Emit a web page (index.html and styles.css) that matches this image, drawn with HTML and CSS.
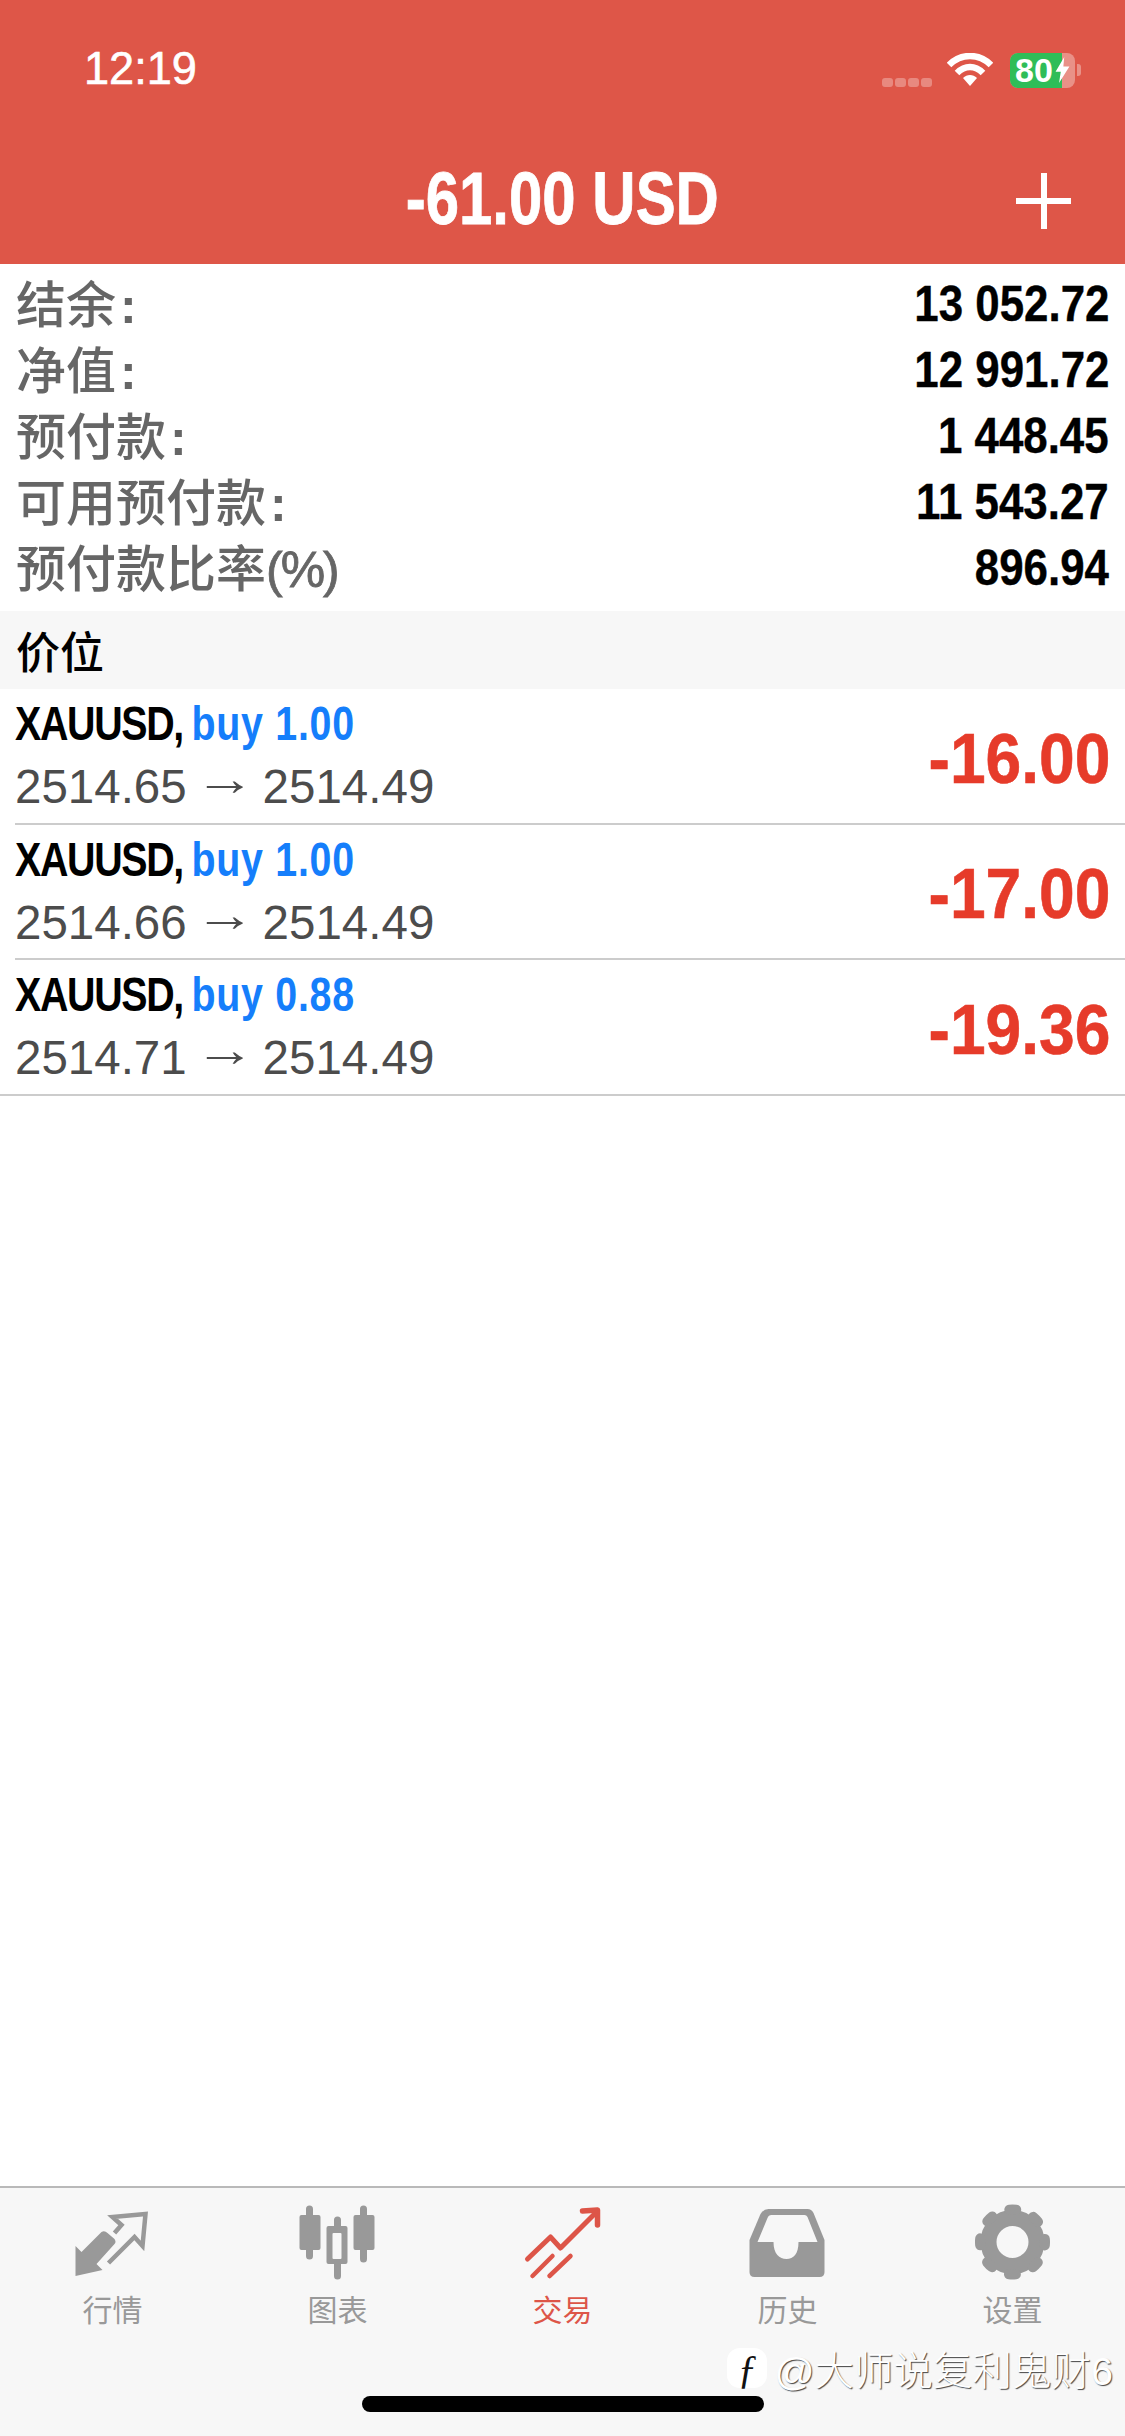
FILE: index.html
```html
<!DOCTYPE html>
<html lang="zh">
<head>
    <meta charset="UTF-8">
    <meta name="viewport" content="width=device-width, initial-scale=1.0">
    <title>交易</title>
    <link rel="stylesheet" href="styles.css">
</head>
<body>
    <div class="page">
        <header class="top">
            <div class="status">
                <span class="time">12:19</span>
                <div class="status-right">
                    <div class="signal"><i></i><i></i><i></i><i></i></div>
                    <svg class="wifi" viewBox="0 0 46 34">
                        <path d="M2 12 C14 0 32 0 44 12" fill="none" stroke="#fff" stroke-width="6.5"/>
                        <path d="M10 20 C18 12 28 12 36 20" fill="none" stroke="#fff" stroke-width="6.5"/>
                        <path d="M16 25 C20 21 26 21 30 25 L23 33 Z" fill="#fff"/>
                    </svg>
                    <div class="battery">
                        <div class="battery-fill"></div>
                        <span class="battery-num">80</span>
                        <svg class="bolt" viewBox="0 0 16 30"><path d="M10 0 L0 17 H6 L4 30 L16 11 H9 Z" fill="#fff"/></svg>
                    </div>
                    <div class="battery-cap"></div>
                </div>
            </div>
            <div class="title-bar">
                <span class="title">-61.00 USD</span>
                <div class="plus"></div>
            </div>
        </header>

        <section class="summary">
            <div class="summary-row"><span class="label">结余<span class="colon">:</span></span><span class="value">13 052.72</span></div>
            <div class="summary-row"><span class="label">净值<span class="colon">:</span></span><span class="value">12 991.72</span></div>
            <div class="summary-row"><span class="label">预付款<span class="colon">:</span></span><span class="value">1 448.45</span></div>
            <div class="summary-row"><span class="label">可用预付款<span class="colon">:</span></span><span class="value">11 543.27</span></div>
            <div class="summary-row"><span class="label">预付款比率<span class="unit">(%)</span></span><span class="value">896.94</span></div>
        </section>

        <div class="section-head">价位</div>

        <section class="trades">
            <div class="trade">
                <div class="trade-info">
                    <div class="trade-name"><span class="sym">XAUUSD,</span> <span class="buy">buy 1.00</span></div>
                    <div class="trade-price">2514.65 <span class="arrow">→</span> 2514.49</div>
                </div>
                <div class="profit">-16.00</div>
            </div>
            <div class="trade">
                <div class="trade-info">
                    <div class="trade-name"><span class="sym">XAUUSD,</span> <span class="buy">buy 1.00</span></div>
                    <div class="trade-price">2514.66 <span class="arrow">→</span> 2514.49</div>
                </div>
                <div class="profit">-17.00</div>
            </div>
            <div class="trade trade-last">
                <div class="trade-info">
                    <div class="trade-name"><span class="sym">XAUUSD,</span> <span class="buy">buy 0.88</span></div>
                    <div class="trade-price">2514.71 <span class="arrow">→</span> 2514.49</div>
                </div>
                <div class="profit">-19.36</div>
            </div>
        </section>

        <nav class="tabbar">
            <div class="tab">
                <svg class="tab-icon" viewBox="2.5 0 100 92">
                    <path d="M15 56 L21 62 L41 42 Q44 40 47 43 L54 49 Q56 52 54 54 L36 74 L42 80 L15 86 Z" fill="#999"/>
                    <path d="M54 43 L61 35 L52 27 L85 24 L82 56 L74 47 L48 73" fill="none" stroke="#999" stroke-width="4.5"/>
                </svg>
                <span>行情</span>
            </div>
            <div class="tab">
                <svg class="tab-icon" viewBox="2.5 0 100 92">
                    <path d="M24 19 V66 M52 30 V86 M78 19 V69" stroke="#999" stroke-width="7" stroke-linecap="round"/>
                    <rect x="14" y="25" width="21" height="35" rx="2" fill="#999"/>
                    <rect x="41" y="36" width="21" height="38" rx="2" fill="#999"/>
                    <rect x="47" y="43" width="9" height="26" rx="1" fill="#f7f7f7"/>
                    <rect x="68" y="25" width="21" height="35" rx="2" fill="#999"/>
                </svg>
                <span>图表</span>
            </div>
            <div class="tab tab-active">
                <svg class="tab-icon" viewBox="2.5 0 100 92">
                    <path d="M17 69 L40 47 L50 58 L85 23" fill="none" stroke="#dd5548" stroke-width="5" stroke-linecap="round" stroke-linejoin="round"/>
                    <path d="M72 21 L87 20 L87 35" fill="none" stroke="#dd5548" stroke-width="5.5" stroke-linecap="round" stroke-linejoin="round"/>
                    <path d="M22 86 L42 66 M39 86 L60 66" fill="none" stroke="#dd5548" stroke-width="4.5" stroke-linecap="round"/>
                </svg>
                <span>交易</span>
            </div>
            <div class="tab">
                <svg class="tab-icon" viewBox="2.5 0 100 92">
                    <path d="M33 19 H72 Q76 19 78 23 L89 50 V82 Q89 87 84 87 H19 Q14 87 14 82 V50 L25 24 Q28 19 33 19 Z" fill="#999"/>
                    <path d="M36 25 H69 Q71 25 72 27 L82 52 H63 C63 64 58 69 51 69 C44 69 38 64 38 52 H22 L32 28 Q33 25 36 25 Z" fill="#f7f7f7"/>
                </svg>
                <span>历史</span>
            </div>
            <div class="tab">
                <svg class="tab-icon" viewBox="2.5 0 100 92">
                    <circle cx="52" cy="52" r="24" fill="none" stroke="#999" stroke-width="16"/>
                    <circle cx="52" cy="52" r="32.5" fill="none" stroke="#999" stroke-width="10" stroke-linecap="round" stroke-dasharray="7 18.53" stroke-dashoffset="3.5"/>
                </svg>
                <span>设置</span>
            </div>
        </nav>

        <div class="home-bar"></div>
        <div class="watermark"><span class="wm-logo">ƒ</span>@大师说复利鬼财6</div>
    </div>
</body>
</html>
```

FILE: styles.css
```css
* {
    box-sizing: border-box;
}

body {
    margin: 0;
    background-color: #fff;
    font-family: "Liberation Sans", "Noto Sans CJK SC", sans-serif;
}

.page {
    position: relative;
    width: 1125px;
    height: 2436px;
    display: flex;
    flex-direction: column;
    overflow: hidden;
}

/* header */
.top {
    height: 264px;
    background-color: #de5648;
    color: #fff;
    flex-shrink: 0;
}

.status {
    height: 140px;
    display: flex;
    justify-content: space-between;
    align-items: center;
    padding: 0 44px 0 84px;
}

.time {
    font-size: 47px;
    margin-bottom: 6px;
    transform: scaleX(0.96);
    transform-origin: left center;
    -webkit-text-stroke: 0.6px #fff;
}

.status-right {
    display: flex;
    align-items: center;
}

.signal {
    display: flex;
    gap: 2px;
    margin: 24px 15px 0 0;
}

.signal i {
    width: 11px;
    height: 9px;
    border-radius: 3px;
    background-color: rgba(255,255,255,0.3);
}

.wifi {
    width: 46px;
    height: 34px;
    margin-right: 17px;
}

.battery {
    position: relative;
    width: 65px;
    height: 35px;
    border-radius: 8px;
    background-color: rgba(255,255,255,0.35);
    overflow: hidden;
    display: flex;
    align-items: center;
}

.battery-fill {
    position: absolute;
    left: 0;
    top: 0;
    bottom: 0;
    width: 52px;
    background-color: #2fbd58;
}

.battery-num {
    position: relative;
    font-size: 34px;
    line-height: 1;
    font-weight: bold;
    padding-left: 5px;
}

.bolt {
    position: relative;
    width: 15px;
    height: 26px;
    margin-left: 2px;
}

.battery-cap {
    width: 4px;
    height: 12px;
    margin-left: 2px;
    border-radius: 0 3px 3px 0;
    background-color: rgba(255,255,255,0.35);
}

.title-bar {
    position: relative;
    height: 124px;
    display: flex;
    justify-content: center;
    align-items: center;
    padding-bottom: 8px;
}

.title {
    font-size: 74px;
    font-weight: bold;
    transform: scaleX(0.81);
    -webkit-text-stroke: 0.8px #fff;
}

.plus {
    position: absolute;
    right: 54px;
    top: 33px;
    width: 55px;
    height: 56px;
    background:
        linear-gradient(#fff, #fff) center / 55px 6px no-repeat,
        linear-gradient(#fff, #fff) center / 6px 56px no-repeat;
}

/* summary */
.summary {
    height: 347px;
    padding: 7px 16px 0;
    flex-shrink: 0;
}

.summary-row {
    height: 66px;
    display: flex;
    justify-content: space-between;
    align-items: center;
}

.label {
    font-size: 50px;
    font-weight: 500;
    color: #666;
    margin-bottom: 6px;
}

.colon {
    font-weight: bold;
    margin-left: 4px;
}

.unit {
    letter-spacing: -2px;
    -webkit-text-stroke: 0.8px #666;
}

.value {
    font-size: 50px;
    font-weight: bold;
    color: #000;
    transform: scaleX(0.877);
    transform-origin: right center;
    -webkit-text-stroke: 0.4px #000;
}

.section-head {
    height: 78px;
    padding: 0 16px;
    display: flex;
    align-items: center;
    background-color: #f7f7f7;
    font-size: 44px;
    font-weight: 500;
    color: #000;
    flex-shrink: 0;
}

/* trades */
.trades {
    flex-shrink: 0;
}

.trade {
    height: 135.5px;
    margin-left: 15px;
    padding-right: 15px;
    display: flex;
    justify-content: space-between;
    align-items: center;
    border-bottom: 2px solid #ccc;
}

.trade-last {
    margin-left: 0;
    padding-left: 15px;
}

.trade-name {
    font-size: 48px;
    line-height: 50px;
    font-weight: bold;
    word-spacing: -3px;
    color: #000;
    margin-bottom: 13px;
    white-space: nowrap;
    transform: scaleX(0.82);
    transform-origin: left center;
}

.sym {
    letter-spacing: -1.6px;
}

.buy {
    color: #157efb;
    letter-spacing: 0.9px;
    word-spacing: 0;
}

.trade-price {
    height: 50px;
    font-size: 47.5px;
    line-height: 50px;
    color: #4c4c4c;
    white-space: nowrap;
}

.arrow {
    display: inline-block;
    margin: 0 1px;
    transform: translateY(-8px) scaleX(1.28);
}

.profit {
    font-size: 71px;
    font-weight: bold;
    color: #e63b2a;
    margin-top: 5px;
    transform: scaleX(0.903);
    transform-origin: right center;
    -webkit-text-stroke: 0.6px #e63b2a;
}

/* tab bar */
.tabbar {
    position: absolute;
    left: 0;
    right: 0;
    bottom: 0;
    height: 250px;
    padding-top: 2px;
    display: flex;
    align-items: flex-start;
    background-color: #f7f7f7;
    border-top: 2px solid #b9b9b9;
}

.tab {
    flex: 1;
    display: flex;
    flex-direction: column;
    align-items: center;
    color: #999;
    font-size: 30px;
    line-height: 36px;
}

.tab-icon {
    width: 100px;
    height: 92px;
    margin-bottom: 11px;
}

.tab-active {
    color: #dd5548;
}

.home-bar {
    position: absolute;
    left: 362px;
    bottom: 24px;
    width: 402px;
    height: 16px;
    border-radius: 8px;
    background-color: #000;
}

.watermark {
    position: absolute;
    right: 12px;
    bottom: 40px;
    display: flex;
    align-items: center;
    font-size: 39.5px;
    font-weight: 300;
    color: #fff;
    text-shadow: 1px 1px 1px #444;
}

.wm-logo {
    width: 40px;
    height: 40px;
    margin-right: 7px;
    border-radius: 13px;
    background-color: #fff;
    color: #111;
    font-family: "Liberation Serif", serif;
    font-style: italic;
    text-align: center;
    line-height: 42px;
    text-shadow: none;
}
```
